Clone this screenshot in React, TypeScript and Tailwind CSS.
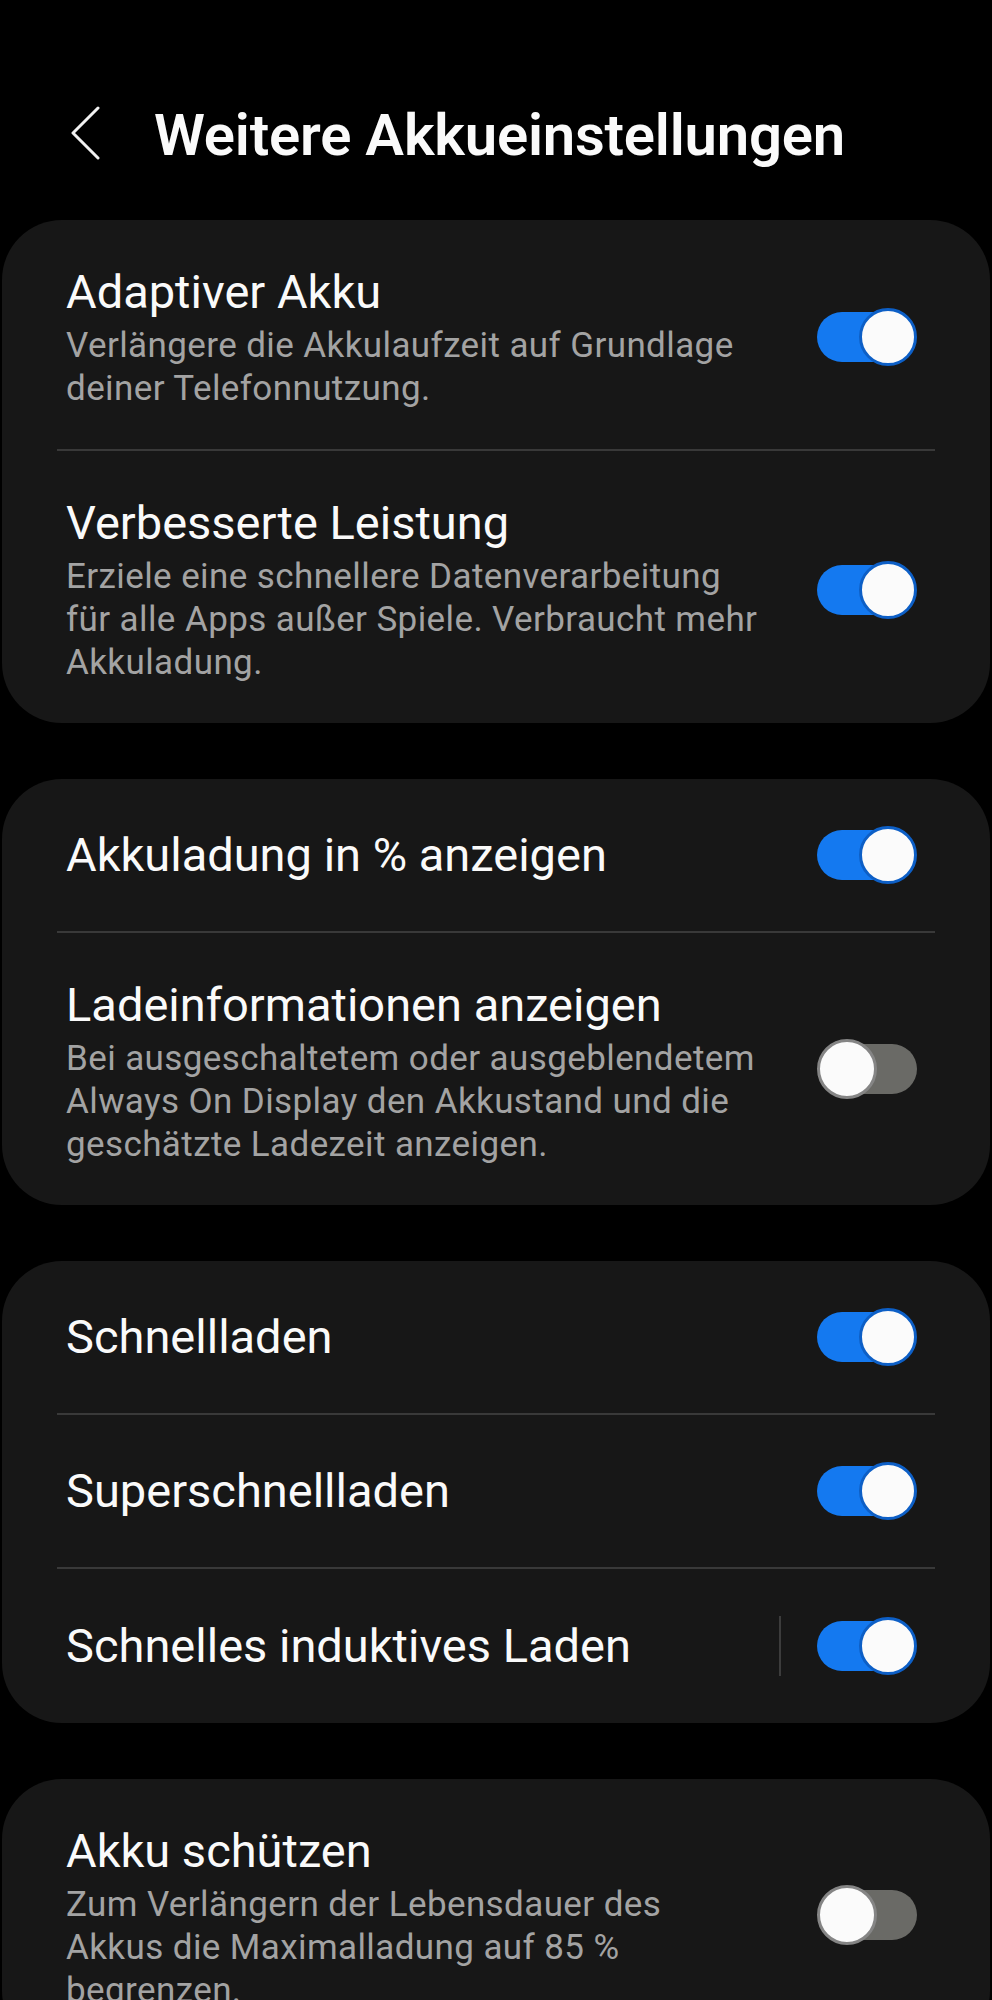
import type { ReactNode } from "react";

type Row = {
  title: string;
  lines?: string[];
  on: boolean;
  divider?: boolean;
};

const groups: Row[][] = [
  [
    {
      title: "Adaptiver Akku",
      lines: ["Verlängere die Akkulaufzeit auf Grundlage", "deiner Telefonnutzung."],
      on: true,
    },
    {
      title: "Verbesserte Leistung",
      lines: [
        "Erziele eine schnellere Datenverarbeitung",
        "für alle Apps außer Spiele. Verbraucht mehr",
        "Akkuladung.",
      ],
      on: true,
    },
  ],
  [
    { title: "Akkuladung in % anzeigen", on: true },
    {
      title: "Ladeinformationen anzeigen",
      lines: [
        "Bei ausgeschaltetem oder ausgeblendetem",
        "Always On Display den Akkustand und die",
        "geschätzte Ladezeit anzeigen.",
      ],
      on: false,
    },
  ],
  [
    { title: "Schnellladen", on: true },
    { title: "Superschnellladen", on: true },
    { title: "Schnelles induktives Laden", on: true, divider: true },
  ],
  [
    {
      title: "Akku schützen",
      lines: [
        "Zum Verlängern der Lebensdauer des",
        "Akkus die Maximalladung auf 85 %",
        "begrenzen.",
      ],
      on: false,
    },
  ],
];

function Toggle({ on }: { on: boolean }) {
  if (on) {
    return (
      <div className="relative w-[100px] h-[58px] shrink-0">
        <div className="absolute left-0 right-[4px] top-[4px] h-[50px] rounded-full bg-[#1479f0]" />
        <div className="absolute right-0 top-0 w-[58px] h-[58px] rounded-full bg-[#fbfbfb] border-[3px] border-[#0d5fc6]" />
      </div>
    );
  }
  return (
    <div className="relative w-[100px] h-[58px] shrink-0 -mt-[6px]">
      <div className="absolute left-[4px] right-0 top-[4px] h-[50px] rounded-full bg-[#6a6a66]" />
      <div className="absolute left-0 top-0 w-[60px] h-[60px] -mt-px rounded-full bg-[#fbfbfb] border-[3px] border-[#858585]" />
    </div>
  );
}

function Card({ children }: { children: ReactNode }) {
  return <div className="mx-[2px] rounded-[60px] bg-[#171717] overflow-hidden">{children}</div>;
}

function SettingRow({ row }: { row: Row }) {
  const multi = !!row.lines;
  return (
    <div
      className={`flex items-center pl-[64px] pr-[73px] ${
        multi ? "pt-[44px] pb-[39px]" : "py-[47px]"
      }`}
    >
      <div className="flex-1 min-w-0">
        <div className="text-[47px] leading-[56px] text-[#fafafa]">{row.title}</div>
        {row.lines && (
          <div className="mt-[4px] text-[35px] leading-[43px] tracking-[0.4px] text-[#a3a3a3]">
            {row.lines.map((l) => (
              <div key={l} className="whitespace-nowrap">{l}</div>
            ))}
          </div>
        )}
      </div>
      {row.divider && <div className="w-[2px] h-[60px] bg-[#3c3c3c] mr-[36px]" />}
      <Toggle on={row.on} />
    </div>
  );
}

export default function App() {
  return (
    <div
      className="min-h-[2000px] bg-black text-white overflow-hidden"
      style={{ fontFamily: "Roboto, 'Noto Sans', sans-serif" }}
    >
      {/* header */}
      <div className="flex items-center h-[70px] mt-[100px] mb-[50px] pl-[71px]">
        <svg width="30" height="54" viewBox="0 0 30 54" className="-mt-[4px]">
          <polyline
            points="27,2 2,27 27,52"
            fill="none"
            stroke="#f2f2f2"
            strokeWidth="3"
            strokeLinecap="round"
            strokeLinejoin="round"
          />
        </svg>
        <h1 className="ml-[53px] text-[58px] leading-[70px] font-semibold tracking-[-0.2px] text-[#fafafa]">
          Weitere Akkueinstellungen
        </h1>
      </div>

      <div className="flex flex-col gap-[56px]">
        {groups.map((g, gi) => (
          <Card key={gi}>
            {g.map((row, ri) => (
              <div key={row.title}>
                {ri > 0 && <div className="mx-[55px] h-[2px] bg-[#393939]" />}
                <SettingRow row={row} />
              </div>
            ))}
          </Card>
        ))}
      </div>
    </div>
  );
}
